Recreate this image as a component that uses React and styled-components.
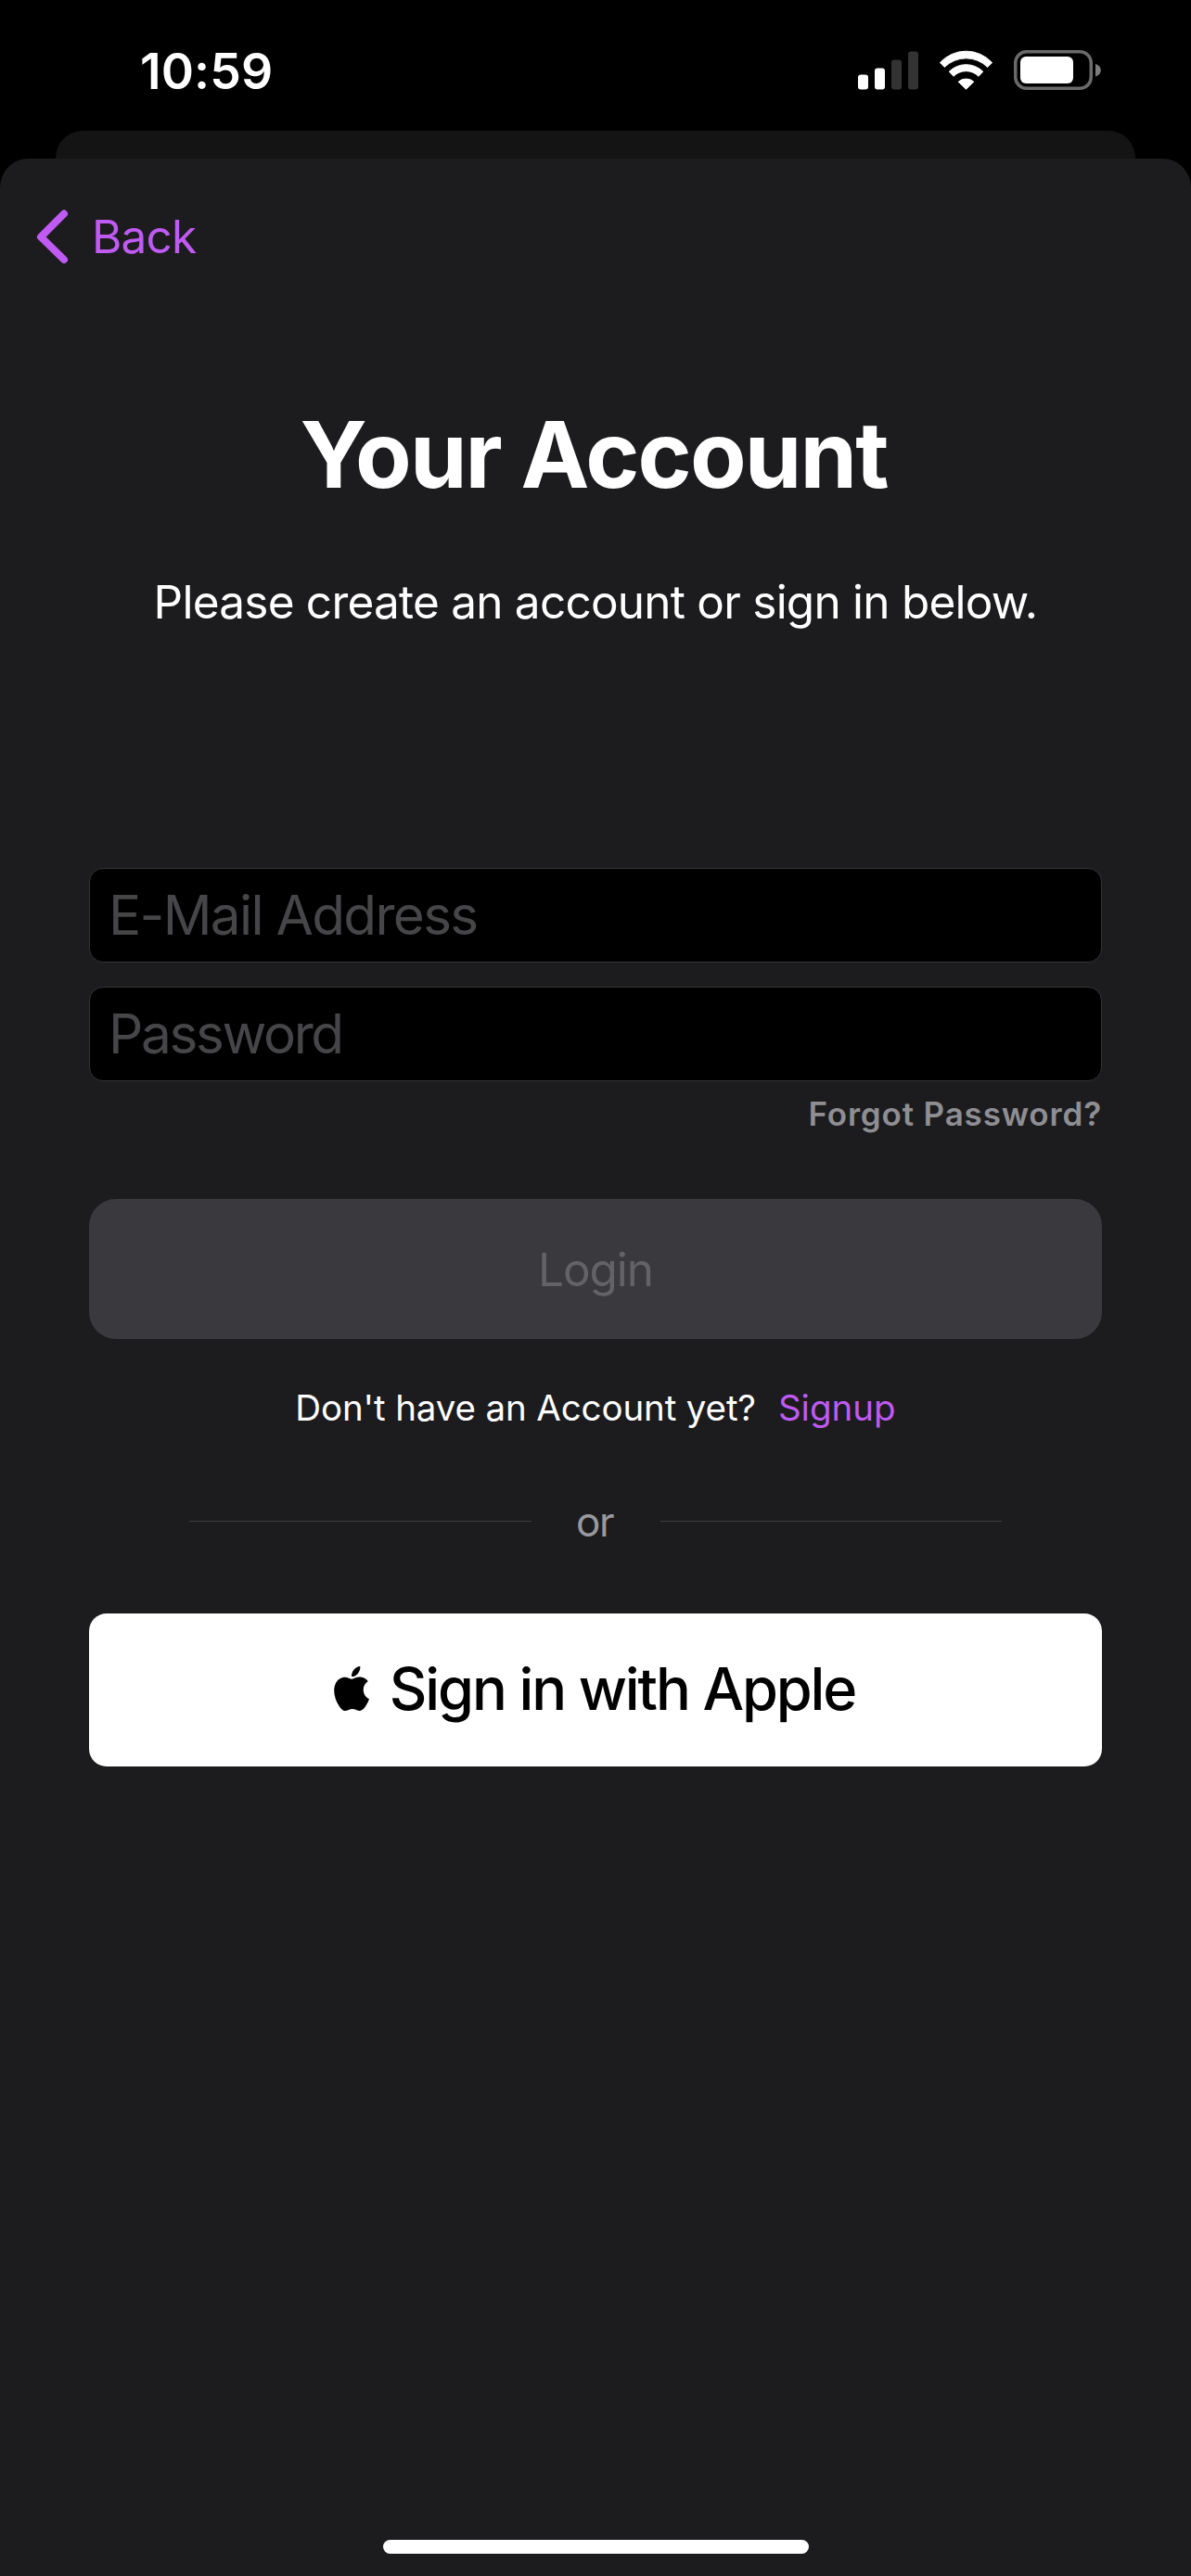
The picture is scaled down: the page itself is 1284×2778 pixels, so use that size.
import React from 'react';
import styled, { createGlobalStyle } from 'styled-components';

const purple = '#bf5af2';

const GlobalStyle = createGlobalStyle`
  * {
    box-sizing: border-box;
  }

  body {
    margin: 0;
    background: #000;
    font-family: Inter, 'Liberation Sans', sans-serif;
  }
`;

const Screen = styled.main`
  display: flex;
  flex-direction: column;
  width: 1284px;
  height: 2778px;
  overflow: hidden;
  background: #000;
`;

const StatusBar = styled.header`
  display: flex;
  flex: none;
  align-items: center;
  justify-content: space-between;
  height: 141px;
  padding: 0 97px 0 151px;
`;

const Clock = styled.time`
  margin-top: 13px;
  color: #fff;
  font-size: 53.5px;
  font-weight: 600;
  line-height: 64px;
  letter-spacing: 0.1px;
`;

const StatusIcons = styled.div`
  display: flex;
  align-items: center;
  gap: 22px;
  margin-top: 10px;

  svg {
    display: block;
  }
`;

const PreviousCard = styled.div`
  flex: none;
  height: 30px;
  margin: 0 60px;
  border-radius: 29px 29px 0 0;
  background: #141414;
`;

const Sheet = styled.section`
  display: flex;
  flex: 1;
  flex-direction: column;
  padding: 0 96px 24px;
  border-radius: 31px 31px 0 0;
  background: #1c1c1e;
`;

const BackButton = styled.button`
  display: flex;
  align-items: center;
  align-self: flex-start;
  gap: 23px;
  height: 110px;
  margin: 29px 0 0 -57px;
  padding: 0;
  border: 0;
  background: none;
  color: ${purple};
  font: 400 49.5px/60px Inter, 'Liberation Sans', sans-serif;
  letter-spacing: -0.85px;
`;

const Title = styled.h1`
  margin: 120px 0 0;
  padding-right: 4px;
  color: #fff;
  font-size: 99px;
  font-weight: 700;
  line-height: 120px;
  letter-spacing: -1.92px;
  text-align: center;
`;

const Subtitle = styled.p`
  margin: 69px 0 0;
  color: #fff;
  font-size: 49.5px;
  line-height: 60px;
  letter-spacing: -0.77px;
  text-align: center;
  white-space: nowrap;
`;

const Form = styled.form`
  display: flex;
  flex-direction: column;
  margin-top: 257px;
`;

const Fields = styled.div`
  display: flex;
  flex-direction: column;
  gap: 26px;
`;

const Field = styled.input`
  width: 100%;
  height: 102px;
  padding: 0 20px 2px;
  border: 1px solid #343436;
  border-radius: 15px;
  outline: none;
  background: #000;
  color: #fff;
  font: 400 58.5px/72px Inter, 'Liberation Sans', sans-serif;
  letter-spacing: ${({ $tracking }) => $tracking}px;

  &::placeholder {
    color: #464648;
    opacity: 1;
  }
`;

const ForgotLink = styled.a`
  align-self: flex-end;
  margin-top: 14px;
  color: #8e8e93;
  font-size: 35px;
  font-weight: 600;
  line-height: 43px;
  letter-spacing: 0.83px;
`;

const LoginButton = styled.button`
  height: 151px;
  margin-top: 70px;
  padding: 0;
  border: 0;
  border-radius: 29px;
  background: #3a393d;
  color: #636267;
  font: 400 49.5px/60px Inter, 'Liberation Sans', sans-serif;
  letter-spacing: -1.1px;
`;

const SignupRow = styled.p`
  display: flex;
  justify-content: center;
  gap: 24px;
  margin: 49px 0 0;
  color: #fff;
  font-size: 38.5px;
  line-height: 50px;
  letter-spacing: -0.13px;
  white-space: nowrap;
`;

const SignupLink = styled.a`
  color: ${purple};
  letter-spacing: 0;
`;

const Divider = styled.div`
  display: grid;
  grid-template-columns: 369px 1fr 368px;
  align-items: center;
  height: 49px;
  margin: 73px 108px 0;
`;

const Rule = styled.span`
  height: 1px;
  background: #3e3e41;
`;

const DividerLabel = styled.span`
  padding: 1px 3px 0 0;
  color: #98989f;
  font-size: 44px;
  line-height: 48px;
  letter-spacing: -1.38px;
  text-align: center;
`;

const AppleButton = styled.button`
  display: flex;
  align-items: center;
  justify-content: center;
  gap: 22px;
  height: 165px;
  margin-top: 75px;
  padding: 0 2px 4px 0;
  border: 0;
  border-radius: 19px;
  background: #fff;
  color: #000;
  font: 500 63px/76px Inter, 'Liberation Sans', sans-serif;
  letter-spacing: -2.12px;
  white-space: nowrap;

  svg {
    flex: none;
  }
`;

const HomeIndicator = styled.div`
  width: 459px;
  height: 15px;
  margin: auto auto 0;
  border-radius: 8px;
  background: #fff;
`;

function SignalIcon() {
  return (
    <svg width="65" height="43" viewBox="0 0 65 43" aria-hidden="true">
      <rect x="0" y="26.5" width="11" height="16" rx="3" fill="#fff" />
      <rect x="18" y="19.5" width="11" height="23" rx="3" fill="#fff" />
      <rect x="36" y="10.5" width="11" height="32" rx="3" fill="#333" />
      <rect x="54" y="1.5" width="11" height="41" rx="3" fill="#333" />
    </svg>
  );
}

function WifiIcon() {
  return (
    <svg width="59" height="43" viewBox="0 0 59 43" fill="#fff" stroke="#fff" strokeWidth="1" strokeLinejoin="round" aria-hidden="true">
      <path d="M1.4 13.6A38 38 0 0 1 57.6 13.6L52.7 18.4A33 33 0 0 0 6.3 18.4Z" />
      <path d="M11.2 23.2A26 26 0 0 1 47.8 23.2L43 28.3A19 19 0 0 0 16 28.3Z" />
      <path d="M21.2 34.2A12.5 12.5 0 0 1 37.8 34.2L29.5 42.2Z" />
    </svg>
  );
}

function BatteryIcon() {
  return (
    <svg width="94" height="43" viewBox="0 0 94 43" aria-hidden="true">
      <rect x="1.75" y="1.75" width="81.5" height="39.5" rx="12" fill="none" stroke="#6a6a6a" strokeWidth="3.5" />
      <rect x="7" y="7" width="57" height="29" rx="6" fill="#fff" />
      <path d="M88 15C91.4 16 93.8 18.4 93.8 21.7S91.4 27.5 88 28.5Z" fill="#7c7c7c" />
    </svg>
  );
}

function ChevronIcon() {
  return (
    <svg width="37" height="60" viewBox="0 0 37 60" fill="none" stroke={purple} strokeWidth="8" strokeLinecap="round" strokeLinejoin="round" aria-hidden="true">
      <path d="M30 5.5L5 30.5L30 55" />
    </svg>
  );
}

function AppleLogo() {
  return (
    <svg width="38" height="48" viewBox="2.1 0 19.7 24" preserveAspectRatio="none" aria-hidden="true">
      <path d="M12.152 6.896c-.948 0-2.415-1.078-3.96-1.04-2.04.027-3.91 1.183-4.961 3.014-2.117 3.675-.546 9.103 1.519 12.09 1.013 1.454 2.208 3.09 3.792 3.039 1.52-.065 2.09-.987 3.935-.987 1.831 0 2.35.987 3.96.948 1.637-.026 2.676-1.48 3.676-2.948 1.156-1.688 1.636-3.325 1.662-3.415-.039-.013-3.182-1.221-3.22-4.857-.026-3.04 2.48-4.494 2.597-4.559-1.429-2.09-3.623-2.324-4.39-2.376-2-.156-3.675 1.09-4.61 1.09zM15.53 3.83c.843-1.012 1.4-2.427 1.245-3.83-1.207.052-2.662.805-3.532 1.818-.78.896-1.454 2.338-1.273 3.714 1.338.104 2.715-.688 3.559-1.701" />
    </svg>
  );
}

export default function App() {
  return (
    <>
      <GlobalStyle />
      <Screen>
        <StatusBar>
          <Clock>10:59</Clock>
          <StatusIcons>
            <SignalIcon />
            <WifiIcon />
            <BatteryIcon />
          </StatusIcons>
        </StatusBar>
        <PreviousCard />
        <Sheet>
          <BackButton type="button">
            <ChevronIcon />
            Back
          </BackButton>
          <Title>Your Account</Title>
          <Subtitle>Please create an account or sign in below.</Subtitle>
          <Form onSubmit={(event) => event.preventDefault()}>
            <Fields>
              <Field type="email" placeholder="E-Mail Address" $tracking={-1.71} />
              <Field type="password" placeholder="Password" $tracking={-2.37} />
            </Fields>
            <ForgotLink>Forgot Password?</ForgotLink>
            <LoginButton type="submit" disabled>
              Login
            </LoginButton>
          </Form>
          <SignupRow>
            <span>Don't have an Account yet?</span>
            <SignupLink>Signup</SignupLink>
          </SignupRow>
          <Divider>
            <Rule />
            <DividerLabel>or</DividerLabel>
            <Rule />
          </Divider>
          <AppleButton type="button">
            <AppleLogo />
            Sign in with Apple
          </AppleButton>
          <HomeIndicator />
        </Sheet>
      </Screen>
    </>
  );
}
